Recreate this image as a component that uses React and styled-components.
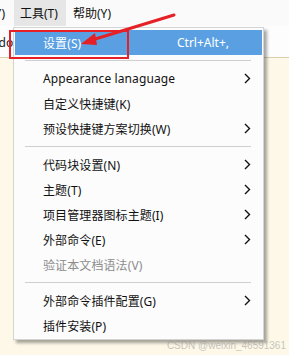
import React from "react";
import styled, { createGlobalStyle } from "styled-components";

const GlobalStyle = createGlobalStyle`
  html, body {
    margin: 0;
    padding: 0;
    background: #fdf8e8;
    overflow: hidden;
  }
`;

const FONT = `"Noto Sans", "Noto Sans CJK SC", sans-serif`;

// data
const items = [
  { label: "设置(S)", shortcut: "Ctrl+Alt+,", active: true },
  { sep: true },
  { label: "Appearance lanaguage", sub: true },
  { label: "自定义快捷键(K)" },
  { label: "预设快捷键方案切换(W)", sub: true },
  { sep: true },
  { label: "代码块设置(N)", sub: true },
  { label: "主题(T)", sub: true },
  { label: "项目管理器图标主题(I)", sub: true },
  { label: "外部命令(E)", sub: true },
  { label: "验证本文档语法(V)", disabled: true },
  { sep: true },
  { label: "外部命令插件配置(G)", sub: true },
  { label: "插件安装(P)" },
];

function Chevron() {
  return (
    <svg width="7" height="11" viewBox="0 0 7 11">
      <polyline points="1,1 5.5,5.5 1,10" fill="none" stroke="#111" strokeWidth="1.4" />
    </svg>
  );
}

function App() {
  return (
    <>
      <GlobalStyle />
      <Page>
        <MenuBar>
          <TopItem $cut>(Y)</TopItem>
          <TopItem $open>工具(T)</TopItem>
          <TopItem>帮助(Y)</TopItem>
        </MenuBar>
        <TabStrip>
          <TabText>todo</TabText>
        </TabStrip>
        <Editor />

        <Menu>
          {items.map((it, i) =>
            it.sep ? (
              <Separator key={i} />
            ) : (
              <Row key={i} $active={it.active} $disabled={it.disabled}>
                <Label>{it.label}</Label>
                {it.shortcut && <Shortcut>{it.shortcut}</Shortcut>}
                <Arrow>{it.sub && <Chevron />}</Arrow>
              </Row>
            )
          )}
        </Menu>

        <Annotation width="289" height="355" viewBox="0 0 289 355">
          <rect x="10" y="31" width="118" height="27" fill="none" stroke="#e52127" strokeWidth="2" />
          <line x1="174" y1="15" x2="92" y2="40" stroke="#e52127" strokeWidth="3" strokeLinecap="round" />
          <polygon points="81,44 95,33 97,45" fill="#e52127" />
        </Annotation>

        <Watermark>CSDN @weixin_46591361</Watermark>
      </Page>
    </>
  );
}

const Page = styled.div`
  position: relative;
  width: 289px;
  height: 355px;
  display: flex;
  flex-direction: column;
  font-family: ${FONT};
  overflow: hidden;
`;

const MenuBar = styled.div`
  height: 26px;
  display: flex;
  align-items: stretch;
  background: #fafafa;
`;

const TopItem = styled.div`
  display: flex;
  align-items: center;
  box-sizing: border-box;
  padding: 0 0 0 ${(p) => (p.$cut ? "0" : p.$open ? "6px" : "7px")};
  margin-left: ${(p) => (p.$cut ? "-9px" : "0")};
  width: ${(p) => (p.$cut ? "23px" : p.$open ? "52px" : "auto")};
  font-size: 12px;
  white-space: nowrap;
  color: #111;
  background: ${(p) => (p.$open ? "#e6e6e6" : "transparent")};
`;

const TabStrip = styled.div`
  height: 31px;
  background: #fdfdfd;
  border-bottom: 1px solid #d9cfae;
  display: flex;
  align-items: center;
`;

const TabText = styled.span`
  font-size: 12px;
  color: #222;
  margin-left: -13px;
  margin-top: 2px;
`;

const Editor = styled.div`
  flex: 1;
  background: #fdf8e8;
`;

const Menu = styled.div`
  position: absolute;
  left: 13px;
  top: 27px;
  width: 247px;
  padding: 2px 1px 1px;
  background: #fcfcfc;
  border: 1px solid #d4d4d4;
  box-shadow: 3px 3px 3px rgba(0, 0, 0, 0.35);
  display: flex;
  flex-direction: column;
`;

const Row = styled.div`
  height: 25px;
  display: flex;
  align-items: center;
  padding-left: 28px;
  font-size: 12px;
  background: ${(p) => (p.$active ? "#5b9fe3" : "transparent")};
  color: ${(p) => (p.$active ? "#ffffff" : p.$disabled ? "#8d8d8d" : "#111")};
`;

const Label = styled.span`
  flex: 1;
  white-space: nowrap;
  letter-spacing: 0.1px;
`;

const Shortcut = styled.span`
  width: 67px;
  white-space: nowrap;
`;

const Arrow = styled.span`
  width: 18px;
  display: flex;
  align-items: center;
`;

const Separator = styled.div`
  height: 11px;
  display: flex;
  align-items: center;
  &::after {
    content: "";
    flex: 1;
    margin: 0 11px 0 10px;
    border-top: 1px solid #cfcfcf;
  }
`;

const Annotation = styled.svg`
  position: absolute;
  left: 0;
  top: 0;
  pointer-events: none;
`;

const Watermark = styled.div`
  position: absolute;
  right: 3px;
  bottom: 4px;
  font-size: 10px;
  color: rgba(150, 150, 150, 0.55);
  font-family: "Liberation Sans", sans-serif;
`;

export default App;
